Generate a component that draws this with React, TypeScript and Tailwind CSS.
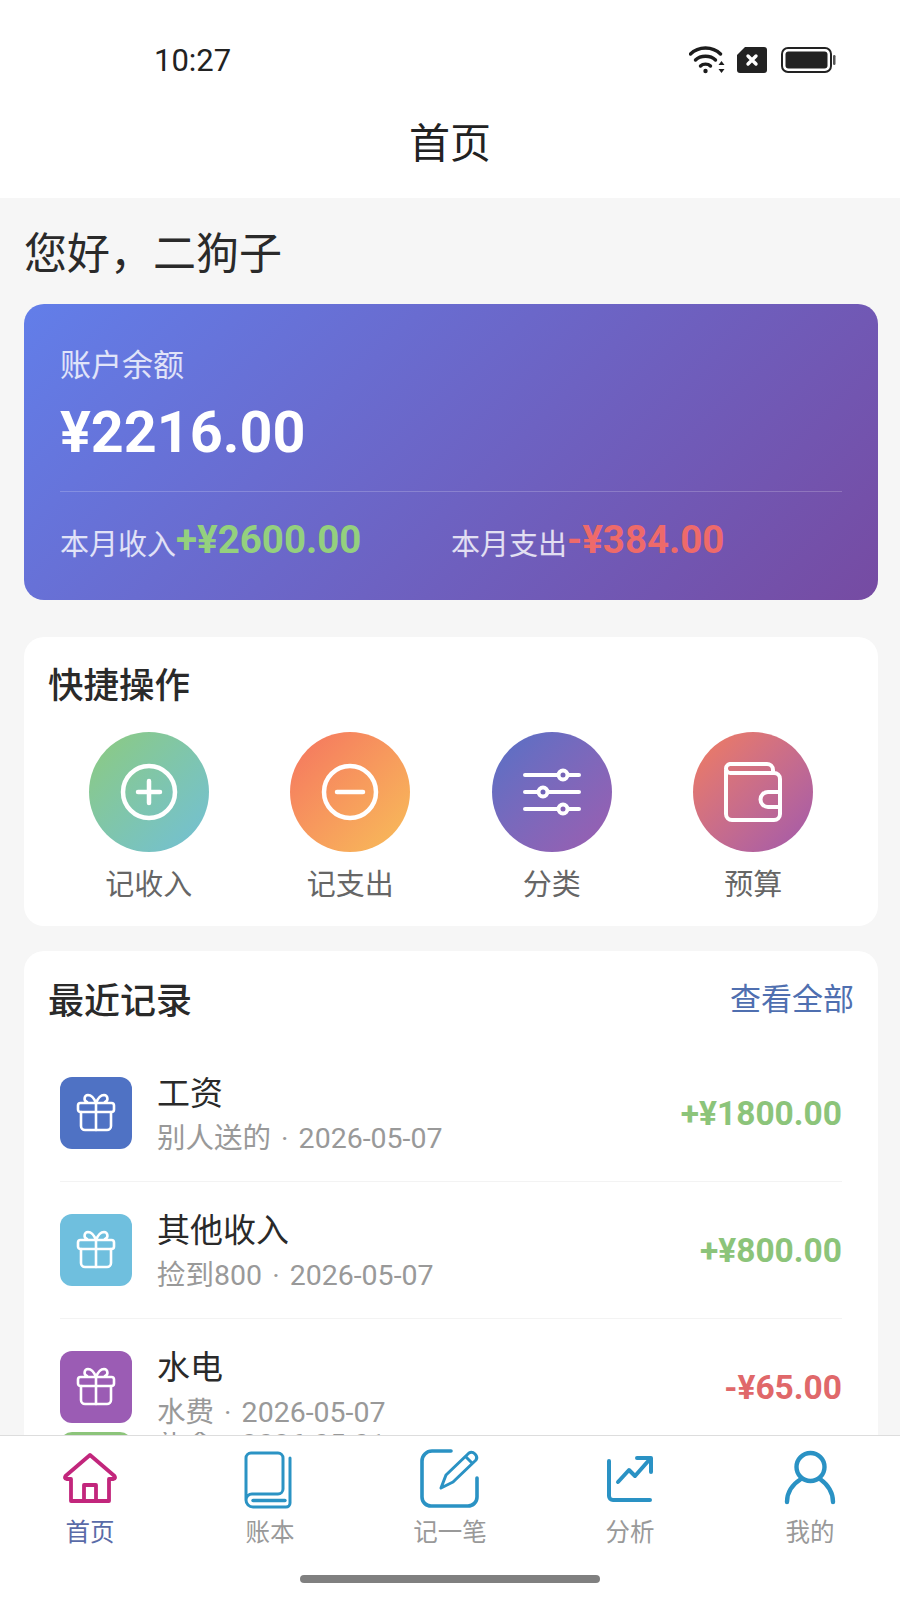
import React from "react";

const font = { fontFamily: 'Roboto, "Noto Sans CJK SC", sans-serif' };

function Gift() {
  return (
    <svg width="40" height="40" viewBox="0 0 40 40" fill="none" stroke="white" strokeWidth="2.6" strokeLinecap="round" strokeLinejoin="round">
      <rect x="2" y="10" width="36" height="9" rx="2.5" />
      <path d="M5 19v14a4 4 0 0 0 4 4h22a4 4 0 0 0 4-4V19" />
      <path d="M20 10v27" />
      <path d="M20 10c-2-5-5-8-8-8a3.6 3.6 0 0 0-1 7" />
      <path d="M20 10c2-5 5-8 8-8a3.6 3.6 0 0 1 1 7" />
    </svg>
  );
}

function PlusIcon() {
  return (
    <svg width="60" height="60" viewBox="0 0 60 60" fill="none" stroke="white" strokeWidth="4.5" strokeLinecap="round">
      <circle cx="30" cy="30" r="26" />
      <path d="M30 19v22M19 30h22" />
    </svg>
  );
}
function MinusIcon() {
  return (
    <svg width="60" height="60" viewBox="0 0 60 60" fill="none" stroke="white" strokeWidth="4.5" strokeLinecap="round">
      <circle cx="30" cy="30" r="26" />
      <path d="M17 30h26" />
    </svg>
  );
}
function SlidersIcon() {
  return (
    <svg width="60" height="60" viewBox="0 0 60 60" fill="none" stroke="white" strokeWidth="4" strokeLinecap="round">
      <path d="M3 13h54M3 30h54M3 47h54" />
      <circle cx="41" cy="13" r="4.5" fill="#7463b6" />
      <circle cx="21" cy="30" r="4.5" fill="#6f64b9" />
      <circle cx="41" cy="47" r="4.5" fill="#8560b4" />
    </svg>
  );
}
function WalletIcon() {
  return (
    <svg width="60" height="60" viewBox="0 0 60 60" fill="none" stroke="white" strokeWidth="4" strokeLinecap="round" strokeLinejoin="round">
      <path d="M8 2H44a6 6 0 0 1 6 6V11" />
      <path d="M3 8V52a6 6 0 0 0 6 6H51a6 6 0 0 0 6-6V17a6 6 0 0 0-6-6H8a4.5 4.5 0 0 1-5-4.5A4.5 4.5 0 0 1 8 2" />
      <path d="M57 30H45a7.5 7.5 0 0 0 0 15H57" />
    </svg>
  );
}

function HomeIcon() {
  return (
    <svg width="60" height="60" viewBox="0 0 60 60" fill="none" stroke="#c2267c" strokeWidth="3.8" strokeLinejoin="round">
      <path d="M30 6L5.5 27Q4 29.5 6.5 30H11V52H49V30H53.5Q56 29.5 54.5 27Z" />
      <path d="M24 52V36H36V52" />
    </svg>
  );
}
function BookIcon() {
  return (
    <svg width="60" height="60" viewBox="0 0 60 60" fill="none" stroke="#2b93c4" strokeWidth="3" strokeLinecap="round" strokeLinejoin="round">
      <path d="M6 51V9a5 5 0 0 1 5-5H38a5 5 0 0 1 5 5V40a5 5 0 0 1-5 5H12a6 6 0 0 0-6 6a7 7 0 0 0 7 7H46a4 4 0 0 0 4-4V9" />
      <path d="M13 51.5H45" strokeWidth="3.4" />
    </svg>
  );
}
function EditIcon() {
  return (
    <svg width="60" height="60" viewBox="0 0 60 60" fill="none" stroke="#2a92c4" strokeWidth="3.6" strokeLinecap="round" strokeLinejoin="round">
      <path d="M31 2H12a10 10 0 0 0-10 10V48a9 9 0 0 0 9 9H48a9 9 0 0 0 9-9V29" />
      <path d="M21 39L26 26L49 4Q52 2 55 5Q58 8 56 11L33 33Z" strokeWidth="3" />
      <path d="M46 8L52 14" strokeWidth="3" />
    </svg>
  );
}
function ChartIcon() {
  return (
    <svg width="60" height="60" viewBox="0 0 60 60" fill="none" stroke="#2a92c4" strokeWidth="4" strokeLinecap="round" strokeLinejoin="round">
      <path d="M9 12V47a4 4 0 0 0 4 4H50" />
      <path d="M18 33L29 21L35 27L50 10" />
      <path d="M37 9H51V23" />
    </svg>
  );
}
function UserIcon() {
  return (
    <svg width="60" height="60" viewBox="0 0 60 60" fill="none" stroke="#2a92c4" strokeWidth="4.4" strokeLinecap="round">
      <circle cx="30.5" cy="18" r="14" />
      <path d="M7 53C7 43 13 35 21 30M53 53C53 43 47 35 40 30" />
    </svg>
  );
}

const quick = [
  { label: "记收入", bg: "bg-linear-to-br from-[#8dca7c] to-[#72bfd6]", icon: <PlusIcon /> },
  { label: "记支出", bg: "bg-linear-to-br from-[#f4735f] to-[#f7bd58]", icon: <MinusIcon /> },
  { label: "分类", bg: "bg-linear-to-br from-[#5570c6] to-[#9b5db0]", icon: <SlidersIcon /> },
  { label: "预算", bg: "bg-linear-to-br from-[#f27c5c] to-[#a258ab]", icon: <WalletIcon /> },
];

const rows = [
  { title: "工资", note: "别人送的", date: "2026-05-07", amount: "+¥1800.00", color: "text-[#8cc47a]", bg: "bg-[#4f72c4]" },
  { title: "其他收入", note: "捡到800", date: "2026-05-07", amount: "+¥800.00", color: "text-[#8cc47a]", bg: "bg-[#6fbfde]" },
  { title: "水电", note: "水费", date: "2026-05-07", amount: "-¥65.00", color: "text-[#e0686a]", bg: "bg-[#9b5cb4]" },
];

const tabs = [
  { label: "首页", icon: <HomeIcon />, color: "text-[#5a6ba8]" },
  { label: "账本", icon: <BookIcon />, color: "text-[#999999]" },
  { label: "记一笔", icon: <EditIcon />, color: "text-[#999999]" },
  { label: "分析", icon: <ChartIcon />, color: "text-[#999999]" },
  { label: "我的", icon: <UserIcon />, color: "text-[#999999]" },
];

export default function App() {
  return (
    <div style={font} className="w-[900px] h-[1600px] flex flex-col overflow-hidden bg-[#f6f6f6]">
      <header className="bg-white h-[198px] shrink-0">
        <div className="mt-[32px] h-[56px] pl-[154px] pr-[64px] flex items-center justify-between">
          <span className="pt-[3px] text-[31px] text-[#222222]">10:27</span>
          <div className="flex items-center">
            <svg width="36" height="30" viewBox="0 0 36 30" fill="none" stroke="#1c1c1c" strokeWidth="3.4" strokeLinecap="round">
              <path d="M1.5 9C9.5 1 23.5 1 31.5 9" />
              <path d="M6.5 15C11.5 10 21.5 10 26.5 15" />
              <path d="M11.5 21C14 18.5 19 18.5 21.5 21" />
              <circle cx="16.5" cy="26" r="2.2" fill="#1c1c1c" stroke="none" />
              <path d="M29.5 20l3-4 3 4zM29.5 24l3 4 3-4z" fill="#1c1c1c" stroke="none" />
            </svg>
            <svg className="ml-[12px]" width="30" height="26" viewBox="0 0 30 26">
              <path d="M8 0H27a3 3 0 0 1 3 3V23a3 3 0 0 1-3 3H3a3 3 0 0 1-3-3V8Z" fill="#222222" />
              <path d="M11 9l8 8M19 9l-8 8" stroke="white" strokeWidth="3.4" strokeLinecap="round" />
            </svg>
            <svg className="ml-[14px]" width="55" height="26" viewBox="0 0 55 26" fill="none">
              <rect x="1" y="1" width="49" height="24" rx="6" stroke="#222222" strokeWidth="2" />
              <rect x="4.5" y="4.5" width="42" height="17" rx="3" fill="#222222" />
              <rect x="52" y="8" width="2.5" height="10" rx="1.2" fill="#555555" />
            </svg>
          </div>
        </div>
        <div className="h-[110px] pt-[4px] flex items-center justify-center text-[41px] text-[#222222]">首页</div>
      </header>

      <main className="flex-1 min-h-0 overflow-hidden pl-6 pr-[22px]">
        <div className="h-[106px] pt-[6px] flex items-center text-[43px] text-[#2a2a2a]">您好，二狗子</div>

        <section className="h-[296px] rounded-[20px] px-9 pt-10 bg-[linear-gradient(135deg,#627ee9,#764ba2)] text-white">
          <div className="text-[31px] leading-[44px] text-white/80">账户余额</div>
          <div className="mt-[10px] text-[57.5px] leading-[70px] font-bold">¥2216.00</div>
          <div className="mt-[23px] h-px bg-white/20" />
          <div className="mt-[25px] grid grid-cols-2">
            <div className="flex items-baseline">
              <span className="text-[29px] leading-[50px] text-white/80">本月收入</span>
              <span className="-translate-y-[2px] text-[38.5px] leading-[50px] font-bold text-[#94d07e]">+¥2600.00</span>
            </div>
            <div className="flex items-baseline">
              <span className="text-[29px] leading-[50px] text-white/80">本月支出</span>
              <span className="-translate-y-[2px] text-[38.5px] leading-[50px] font-bold text-[#ee6a6a]">-¥384.00</span>
            </div>
          </div>
        </section>

        <section className="mt-[37px] rounded-[20px] bg-white px-6 pt-[25px] pb-[22px]">
          <h2 className="text-[35.5px] leading-[48px] font-medium text-[#2a2a2a]">快捷操作</h2>
          <div className="mt-[22px] grid grid-cols-4">
            {quick.map((q) => (
              <div key={q.label} className="flex flex-col items-center">
                <div className={`w-[120px] h-[120px] rounded-full flex items-center justify-center ${q.bg}`}>{q.icon}</div>
                <span className="mt-[14px] text-[29px] leading-[38px] text-[#666666]">{q.label}</span>
              </div>
            ))}
          </div>
        </section>

        <section className="mt-[25px] rounded-t-[20px] bg-white px-6 pt-6 pb-10">
          <div className="h-[50px] flex items-center justify-between">
            <h2 className="pt-[4px] text-[36px] font-medium text-[#2a2a2a]">最近记录</h2>
            <span className="text-[31px] text-[#4f6fb0]">查看全部</span>
          </div>
          <div className="mt-5">
            {rows.map((r, i) => (
              <div key={r.title} className={`mx-3 ${i < 2 ? "h-[137px] border-b border-[#f3f3f3]" : "h-[136px]"} flex items-center`}>
                <div className={`w-[72px] h-[72px] rounded-xl flex items-center justify-center ${r.bg}`}>
                  <Gift />
                </div>
                <div className="ml-[25px] flex-1 pt-[7px]">
                  <div className="text-[33px] leading-[46px] text-[#2a2a2a]">{r.title}</div>
                  <div className="-mt-px text-[28.5px] leading-[46px] text-[#999999]">
                    {r.note}
                    <span className="mx-[3px]"> · </span>
                    {r.date}
                  </div>
                </div>
                <div className={`pt-[2px] text-[33.5px] font-bold ${r.color}`}>{r.amount}</div>
              </div>
            ))}
            <div className="mx-3 -mt-[23px] h-[6px] overflow-hidden flex">
              <div className="w-[72px] h-[72px] rounded-xl bg-[#8cc47a] shrink-0" />
              <div className="ml-[25px] -mt-[2px] text-[28.5px] leading-[29px] text-[#999999]">
                礼金
                <span className="mx-[3px]"> · </span>
                2026-05-01
              </div>
            </div>
          </div>
        </section>
      </main>

      <nav className="h-[165px] shrink-0 bg-white border-t border-[#dddddd]">
        <div className="grid grid-cols-5 pt-[13px]">
          {tabs.map((t) => (
            <div key={t.label} className="flex flex-col items-center">
              {t.icon}
              <span className={`mt-[6px] text-[24.5px] leading-[36px] ${t.color}`}>{t.label}</span>
            </div>
          ))}
        </div>
        <div className="mt-[24px] mx-auto w-[300px] h-2 rounded-full bg-[#808080]" />
      </nav>
    </div>
  );
}
